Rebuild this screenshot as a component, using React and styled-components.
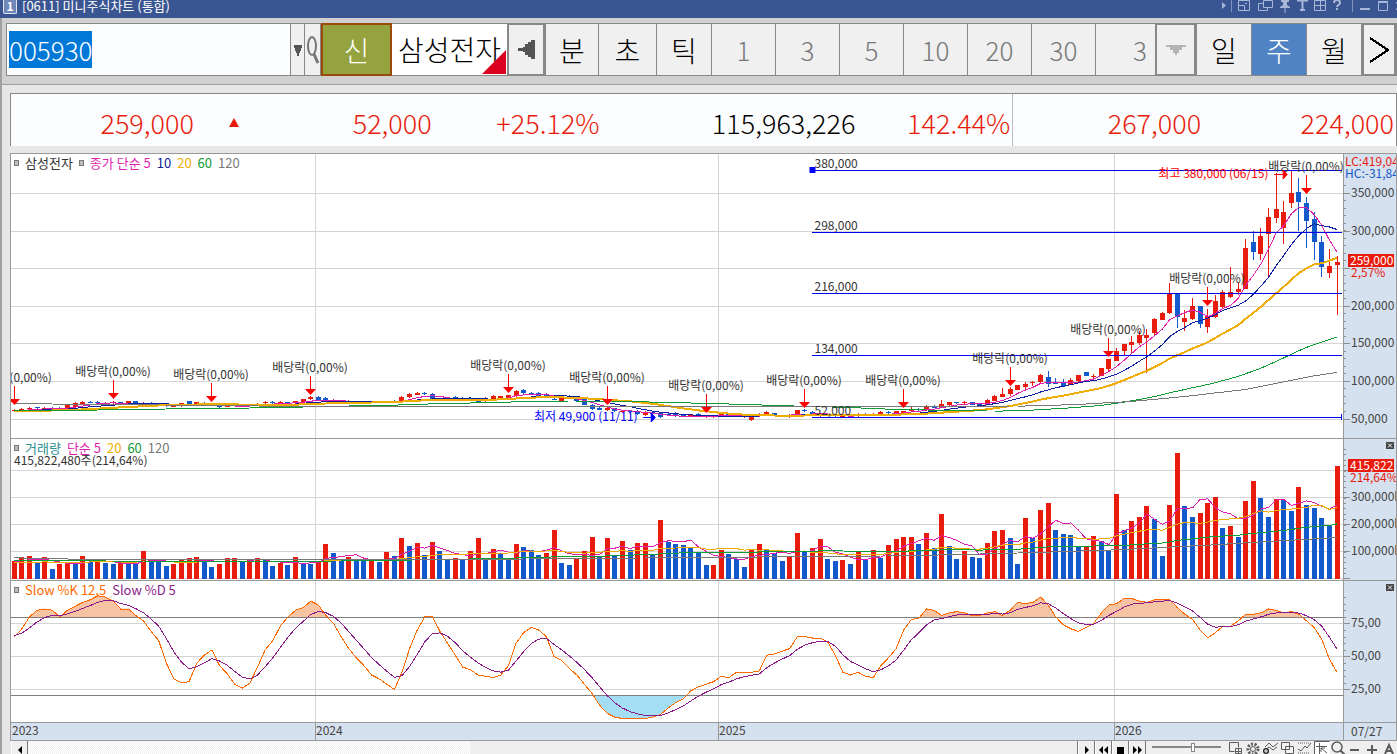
import React, { useEffect, useLayoutEffect, useRef, useState } from 'react';
import { createGlobalStyle, styled } from 'styled-components';

const UP = '#e81b0c';
const DOWN = '#1259cb';
const MA = { 5: '#e01fb0', 10: '#0b1fa0', 20: '#f0ac00', 60: '#0f9b35', 120: '#777777' };

// weekly closes in thousand won, quiet stretch (open is taken from the list below)
const quietClose = [
  62, 63.5, 65, 64.5, 65, 64, 63.5, 68, 71, 72.5, 72, 71.5, 71.5, 72.5, 70, 73.5, 70.5, 71.5, 69.5, 69,
  67.5, 67.5, 70.8, 70.5, 72, 68.5, 69, 65.5, 67.3, 69.5, 68, 69.5, 70.5, 72.5, 71.5, 72.5, 71, 73.5, 76, 79,
  75.5, 73, 75, 73.5, 74, 72.5, 72.5, 73.5, 72.5, 73.5, 73, 79.5, 83.5, 84.5, 83, 76.5, 75, 76.5, 76.5, 76,
  75, 72.5, 78, 80.5, 80, 81.5, 87, 84, 84, 81, 80, 76, 80, 77, 74, 69, 63.5, 62.5, 64.5, 60,
  61, 60, 56.5, 59, 56, 52.5, 55, 53.5, 53, 56, 53.5, 54.5, 54.5, 56, 55, 54.5, 53.5, 53, 56.5, 59.2,
  54.5, 53.5, 55.5, 61.5, 60, 56, 55.5, 54.5, 54, 54.5, 54, 57, 55, 56.5, 59, 57.5, 60,
];
const quietBody = [
  1, 1, 1, -1, 1, -1, -1, 5, 5, 2, -1, -1, 1, 1, -2, 4, -3, 2, -2, -1,
  -2, 1, 4, -3, 2, -3, -1, -2, 1, 1, -1, 2, 1, 1, -1, 1, -1, 2, 3, 3,
  -4, -5, 2, -1, 1, -1, -1, 1, -1, 1, -1, 7, 4, 2, -2, -7, -2, 1, -3, -2,
  -3, -3, 4, 5, 3, 3, 7, -5, -1, -4, -3, -1, 6, -4, -4, -7, -5, -2, 3, -4,
  1, -1, -4, 4, -3, -5, -2, -5, -2, 3, -3, 2, 2, 1, -1, 1, 1, 4, 3, 3,
  -3, -1, 3, 6, -2, -3, 2, -1, -1, 1, -1, 3, -2, 2, 3, -2, 3,
];
// open, close, high, low
const recent = [
  [58.5, 60.5, 61, 58], [60.5, 63, 66, 60], [63, 62.5, 64, 61], [62, 67.5, 68, 61],
  [67.5, 65, 68, 65], [65, 70, 75, 65], [68.5, 72.5, 73, 67], [72, 71.5, 73, 70],
  [71, 72, 74, 69], [72.5, 69, 73, 68], [70, 68.5, 70, 68], [68.5, 75, 76.5, 68],
  [74, 80.5, 82, 74], [79.5, 83, 91, 79], [83, 90, 92, 81], [88.5, 95, 95, 88],
  [92.5, 96.5, 99, 90], [98, 99, 100, 94], [99, 108.5, 110, 97], [106, 96.5, 114, 92],
  [98, 97.5, 105, 96], [99, 94, 103, 93], [95, 102, 105, 95], [100, 108.5, 109, 98],
  [112.5, 107, 113, 107], [106, 107, 110, 102], [107, 117.5, 118, 107], [116.5, 129.5, 130, 114],
  [127, 140, 144, 127], [140, 149.5, 150, 135], [148, 152, 160, 137], [151, 161.5, 167, 148],
  [157.5, 161.5, 169, 111], [164, 183, 184, 161], [181.5, 190.5, 192, 181], [190.5, 217, 230, 189],
  [215.5, 185.5, 216, 171], [179, 184, 195, 167], [183, 200, 211, 182], [200, 176, 200, 171],
  [172, 187, 196, 164.5], [185.5, 206.5, 215, 184], [199, 218.5, 221, 197], [212, 218.5, 252, 211],
  [218.5, 222.5, 231, 215], [222.5, 277, 289, 222], [285, 271.5, 300, 261], [269, 293, 303, 261],
  [295.5, 318, 330, 239], [317, 329, 376, 310], [303.5, 325, 339, 282], [337, 350, 380, 330],
  [351, 338, 370, 300], [337, 313, 345, 277], [315.5, 285, 325, 261], [285, 252, 293, 239],
  [244, 253, 276, 237], [254.5, 259, 267, 188],
];
const candles = quietClose
  .map((c, i) => {
    const o = c - quietBody[i];
    return [o, c, Math.max(o, c) + 1, Math.min(o, c) - 1];
  })
  .concat(recent);

// weekly volume, 81 = 100,000k
const volumes = [
  54, 65, 69, 52, 66, 30, 45, 52, 49, 69, 52, 54, 48, 45, 49, 47, 46, 84, 55, 54,
  39, 45, 60, 63, 66, 56, 36, 45, 63, 64, 55, 56, 63, 56, 39, 48, 42, 66, 48, 45,
  54, 105, 78, 60, 66, 60, 56, 57, 51, 81, 69, 123, 99, 108, 72, 111, 84, 58, 63, 60,
  84, 123, 60, 90, 79, 60, 105, 96, 86, 72, 78, 147, 48, 42, 60, 84, 126, 66, 123, 70,
  114, 87, 108, 109, 74, 177, 111, 105, 102, 95, 79, 42, 43, 87, 75, 60, 36, 87, 105, 88,
  77, 54, 66, 138, 82, 93, 120, 60, 54, 57, 45, 82, 57, 87, 63, 102, 120, 126, 127, 105,
  138, 93, 195, 99, 60, 84, 66, 63, 108, 144, 147, 123, 45, 183, 123, 207, 228, 147, 135, 132,
  97, 98, 129, 114, 85, 255, 146, 174, 186, 219, 180, 69, 222, 378, 219, 186, 198, 228, 246, 153,
  159, 126, 234, 294, 243, 186, 240, 238, 204, 276, 222, 213, 183, 160, 339,
];

const slowK = [
  65, 71, 80, 85, 86, 85, 80, 85, 88, 91, 93, 96, 95, 92, 86, 86, 81, 77, 69, 62,
  45, 33, 30, 31, 45, 51, 55, 43, 37, 29, 26, 30, 42, 55, 62, 73, 80, 85, 87, 92,
  89, 81, 75, 65, 56, 49, 43, 36, 33, 29, 25, 38, 56, 70, 80, 80, 69, 60, 51, 42,
  40, 36, 35, 34, 36, 43, 60, 68, 72, 70, 65, 50, 47, 41, 36, 29, 22, 13, 7, 4,
  3, 3, 3, 3, 4, 6, 11, 15, 18, 24, 27, 29, 31, 35, 34, 38, 38, 38, 39, 51,
  52, 54, 56, 65, 65, 64, 64, 61, 51, 38, 36, 38, 35, 34, 43, 49, 56, 70, 78, 79,
  86, 85, 81, 83, 84, 83, 81, 81, 83, 84, 81, 85, 91, 90, 91, 95, 89, 80, 74, 71,
  69, 72, 75, 83, 89, 90, 94, 94, 92, 91, 93, 93, 93, 87, 82, 78, 70, 64, 68, 73,
  73, 77, 82, 82, 83, 86, 85, 83, 84, 82, 77, 72, 63, 48, 38,
];

const COUNT = candles.length;
const years = [[0, '2023'], [39.6, '2024'], [92.6, '2025'], [144.6, '2026']];
const retracement = [380, 298, 216, 134, 52];
const dividends = [
  [0, 251], [13, 245], [26, 248], [39, 241], [65, 239], [78, 251], [91, 259],
  [104, 254], [117, 254], [131, 232], [144, 203], [157, 152], [170, 40],
];

function average(list, size, seed) {
  return list.map((_, i) => {
    let sum = 0;
    for (let k = i - size + 1; k <= i; k++) sum += k < 0 ? seed : list[k];
    return sum / size;
  });
}

function between(points) {
  return Array.from({ length: COUNT }, (_, i) => {
    const n = points.findIndex((p) => p[0] >= i);
    if (n <= 0) return points[0][1];
    const [x0, y0] = points[n - 1];
    const [x1, y1] = points[n];
    return y0 + ((y1 - y0) * (i - x0)) / (x1 - x0);
  });
}

const closes = candles.map((c) => c[1]);
const priceMa = {
  120: between([[0, 71], [12, 70], [27, 68.5], [40, 67], [60, 67], [68, 67.7], [100, 67.7], [112, 67], [134, 68], [140, 70], [147, 74], [154, 80.5], [162, 90], [171, 108], [174, 112.5]]),
  60: average(closes, 60, 61.5),
  20: average(closes, 20, 61),
  10: average(closes, 10, 61.5),
  5: average(closes, 5, 61.5),
};
const volumeMa = {
  5: average(volumes, 5, 54),
  20: average(volumes, 20, 50),
  60: average(volumes, 60, 56),
  120: between([[0, 65], [10, 60], [60, 60], [90, 66], [117, 71], [133, 80], [145, 89], [157, 103], [174, 126]]),
};
const slowD = slowK.reduce((out, k, i) => {
  out.push(i === 0 ? 66 : out[i - 1] + (k - out[i - 1]) / 3);
  return out;
}, []);

const priceY = (p) => 265 - (p - 50) * 0.7533;
const volumeY = (v) => 140 - v / 3;
const slowY = (v) => 42 + (75 - v) * 1.32;

function useWidth() {
  const ref = useRef(null);
  const [width, setWidth] = useState(1332);
  useLayoutEffect(() => {
    const measure = () => setWidth(ref.current.clientWidth);
    measure();
    const observer = new ResizeObserver(measure);
    observer.observe(ref.current);
    return () => observer.disconnect();
  }, []);
  return [ref, width];
}

function Curve({ data, x, y, color, width = 1 }) {
  const points = data.map((v, i) => `${x(i)},${(y(v) + 0.5).toFixed(1)}`).join(' ');
  return <polyline points={points} fill="none" stroke={color} strokeWidth={width} shapeRendering="crispEdges" />;
}

function Grid({ x, width, height, levels }) {
  return (
    <g fill="#d4d4d4" shapeRendering="crispEdges">
      {levels.map((y) => <rect key={y} x="0" y={y} width={width} height="1" />)}
      {years.slice(1).map(([i, year]) => <rect key={year} x={Math.round(x(i))} y="0" width="1" height={height} />)}
    </g>
  );
}

function PricePlot({ x, width }) {
  const left = x(105);
  return (
    <Plot $height={284}>
      <Grid x={x} width={width} height={284} levels={[39, 77, 114, 152, 189, 227, 265]} />
      <g shapeRendering="crispEdges">
        {candles.map(([o, c, h, l], i) => {
          const cx = Math.floor(x(i));
          const top = Math.round(priceY(Math.max(o, c)));
          const size = Math.max(1, Math.round(priceY(Math.min(o, c))) - top);
          const high = Math.round(priceY(h));
          return (
            <g key={i} fill={c >= o ? UP : DOWN}>
              <rect x={cx} y={high} width="1" height={Math.round(priceY(l)) - high} />
              <rect x={cx - 2} y={top} width="5" height={size} />
            </g>
          );
        })}
      </g>
      <Curve data={priceMa[5]} x={x} y={priceY} color={MA[5]} />
      <Curve data={priceMa[10]} x={x} y={priceY} color={MA[10]} />
      <Curve data={priceMa[20]} x={x} y={priceY} color={MA[20]} width={2} />
      <Curve data={priceMa[60]} x={x} y={priceY} color={MA[60]} />
      <Curve data={priceMa[120]} x={x} y={priceY} color={MA[120]} />
      {retracement.map((p) => (
        <g key={p}>
          <rect x={left} y={Math.floor(priceY(p))} width={width - left - 1} height="1" fill="#0000f0" shapeRendering="crispEdges" />
          <text x={left + 2} y={Math.floor(priceY(p)) - 2} fill="#333">{p},000</text>
        </g>
      ))}
      <rect x={left - 3} y="13" width="6" height="6" fill="#0000ff" />
      <rect x={width - 2} y="260" width="1" height="6" fill="#0000ff" />
      {dividends.map(([i, tip]) => {
        const cx = Math.floor(x(i));
        return (
          <g key={i}>
            <text x={cx} y={tip - 23} fill="#333" textAnchor="middle">배당락(0,00%)</text>
            <rect x={cx} y={tip - 19} width="1" height="14" fill="#f00" />
            <path d={`M${cx - 5} ${tip - 6}h11l-5.5 6z`} fill="#f00" />
          </g>
        );
      })}
      <text x={x(165)} y="24" fill="#f00" textAnchor="end">최고 380,000 (06/15)</text>
      <path d={`M${x(166) - 2} 20.5h9m0-4.500l4 4.500l-4 4.500z`} fill="#f00" stroke="#f00" />
      <text x={x(82)} y="267" fill="#00f" textAnchor="end">최저 49,900 (11/11)</text>
      <path d={`M${x(83) - 2} 263.500h8m0-4.500l4 4.500l-4 4.500z`} fill="#00f" stroke="#00f" />
    </Plot>
  );
}

function VolumePlot({ x, width }) {
  return (
    <Plot $height={141}>
      <Grid x={x} width={width} height={141} levels={[31, 58, 85, 112, 139]} />
      <g shapeRendering="crispEdges">
        {volumes.map((v, i) => (
          <rect key={i} x={Math.floor(x(i)) - 2} y={Math.round(volumeY(v))} width="5" height={Math.round(v / 3)} fill={i === 0 || v > volumes[i - 1] ? UP : DOWN} />
        ))}
      </g>
      {[5, 20, 60, 120].map((n) => <Curve key={n} data={volumeMa[n]} x={x} y={volumeY} color={MA[n]} />)}
    </Plot>
  );
}

function SlowPlot({ x, width }) {
  const line = slowK.map((v, i) => `${x(i)},${slowY(v)}`).join(' ');
  return (
    <Plot $height={141}>
      <clipPath id="overbought"><rect x="0" y="0" width={width} height="36" /></clipPath>
      <clipPath id="oversold"><rect x="0" y="115" width={width} height="30" /></clipPath>
      <Grid x={x} width={width} height={141} levels={[42, 75, 108]} />
      <polygon points={`${x(0)},141 ${line} ${x(174)},141`} fill="#f6c3a3" clipPath="url(#overbought)" />
      <polygon points={`${x(0)},0 ${line} ${x(174)},0`} fill="#a4def4" clipPath="url(#oversold)" />
      <rect x="0" y="36" width={width} height="1" fill="#808080" />
      <rect x="0" y="114" width={width} height="1" fill="#808080" />
      <Curve data={slowK} x={x} y={slowY} color="#ff6a00" />
      <Curve data={slowD} x={x} y={slowY} color="#8b1a8b" />
    </Plot>
  );
}

function Ticks({ from, to, step, major }) {
  const marks = [];
  for (let y = from; y <= to; y += step) marks.push(Math.round(y));
  return (
    <g fill="#8d8d8d">
      {marks.map((y) => <rect key={y} x="0" y={y} width="2" height="1" />)}
      {major.map((y) => <rect key={`m${y}`} x="0" y={y} width="6" height="1" />)}
    </g>
  );
}

function AxisLabels({ rows }) {
  return rows.map(([y, label]) => <text key={label} x="7" y={y + 5} fill="#444">{label}</text>);
}

function ClosePanel() {
  return (
    <CloseButton aria-label="닫기">
      <svg width="8" height="7" viewBox="0 0 8 7"><path d="M2 1.500l4 4M6 1.500l-4 4" stroke="#fff" /></svg>
    </CloseButton>
  );
}

function Charts() {
  const [ref, width] = useWidth();
  const step = (width - 9.3) / (COUNT - 1);
  const x = (i) => 3.3 + i * step;

  return (
    <ChartGrid>
      <Panel ref={ref}>
        <Legend>
          <Marker /><Key $color="#333">삼성전자</Key>
          <Marker /><Key $color={MA[5]}>종가 단순 5</Key>
          <Key $color={MA[10]}>10</Key><Key $color={MA[20]}>20</Key>
          <Key $color={MA[60]}>60</Key><Key $color={MA[120]}>120</Key>
        </Legend>
        <PricePlot x={x} width={width} />
      </Panel>
      <Axis>
        <Plot $height={284}>
          <Ticks from={31} to={270} step={7.533} major={[39, 77, 114, 152, 189, 227, 265]} />
          <AxisLabels rows={[[38, '350,000'], [76, '300,000'], [151, '200,000'], [188, '150,000'], [226, '100,000'], [264, '50,000']]} />
          <text x="1" y="12" fill={UP}>LC:419,04</text>
          <text x="1" y="24" fill={DOWN}>HC:-31,84</text>
          <rect x="4" y="100" width="46" height="13" fill={UP} />
          <text x="6" y="111" fill="#fff">259,000</text>
          <text x="7" y="123" fill={UP}>2,57%</text>
        </Plot>
      </Axis>

      <Panel>
        <Legend>
          <Marker /><Key $color="#2b8f8f">거래량</Key>
          <Key $color={MA[5]}>단순 5</Key><Key $color={MA[20]}>20</Key>
          <Key $color={MA[60]}>60</Key><Key $color={MA[120]}>120</Key>
          <Total>415,822,480주(214,64%)</Total>
        </Legend>
        <VolumePlot x={x} width={width} />
      </Panel>
      <Axis>
        <ClosePanel />
        <Plot $height={141}>
          <Ticks from={10} to={139} step={5.4} major={[31, 58, 85, 112, 139]} />
          <AxisLabels rows={[[57, '300,000k'], [84, '200,000k'], [111, '100,000k']]} />
          <rect x="4" y="20" width="46" height="13" fill={UP} />
          <text x="6" y="31" fill="#fff">415,822</text>
          <text x="6" y="43" fill={UP}>214,64%</text>
        </Plot>
      </Axis>

      <Panel>
        <Legend>
          <Marker /><Key $color="#ff6a00">Slow %K 12,5</Key><Key $color="#8b1a8b">Slow %D 5</Key>
        </Legend>
        <SlowPlot x={x} width={width} />
      </Panel>
      <Axis>
        <ClosePanel />
        <Plot $height={141}>
          <Ticks from={16} to={110} step={6.6} major={[42, 75, 108]} />
          <AxisLabels rows={[[41, '75,00'], [74, '50,00'], [107, '25,00']]} />
        </Plot>
      </Axis>

      <DateAxis>
        <Plot $height={17}>
          {years.map(([i, year], n) => (
            <g key={year}>
              {n > 0 && <rect x={Math.round(x(i))} y="0" width="1" height="17" fill="#999" />}
              <text x={n ? Math.round(x(i)) + 1 : 1} y="12" fill="#444">{year}</text>
            </g>
          ))}
        </Plot>
      </DateAxis>
      <DateAxis $end>07/27</DateAxis>
    </ChartGrid>
  );
}

function TitleIcons() {
  return (
    <svg width="176" height="13" fill="none" stroke="#a9b7d9" strokeWidth="1">
      <path d="M1 2l4 3.500l-4 3.500z" fill="#a9b7d9" stroke="none" />
      <path d="M10.500 0v12M131.500 0v12" stroke="#8193bd" />
      <path d="M17.500 .5h11v10h-11zM17.500 5.500h6v5" />
      <path d="M24 3.500h2M42.500 .5h9v7h-9zM42 3.500h-4.500v7h9v-3" />
      <path d="M60 0h8v2h-2v3l3 2v1h-10v-1l3-2v-3h-2z" fill="#a9b7d9" stroke="none" />
      <path d="M64 8v5" />
      <path d="M81.500 0v10M76 .5h11M79 10h5" strokeWidth="2" />
      <path d="M93.500 .5h11v10h-11zM99.500 0v10M93 5.500h11" />
      <path d="M113 3c0-4 6-4 6 0c0 2-3 2-3 4M116 8v2" strokeWidth="2" />
      <path d="M139 9h10" strokeWidth="2" />
      <path d="M157.500 2.500h9v8h-9zM157 1.500h10" />
      <path d="M175 2l5 8M175 10l5-8" />
    </svg>
  );
}

export default function App() {
  const codeRef = useRef(null);
  useEffect(() => {
    codeRef.current.focus();
    codeRef.current.select();
  }, []);

  return (
    <Window>
      <GlobalStyle />
      <TitleBar>
        <WindowNumber>1</WindowNumber>
        <WindowTitle>[0611] 미니주식차트 (통합)</WindowTitle>
        <TitleIcons />
      </TitleBar>
      <Body>
        <Toolbar>
          <CodeInput ref={codeRef} aria-label="종목코드" defaultValue="005930" />
          <Tool $width={14} aria-label="종목 목록">
            <svg width="8" height="12"><path d="M0 1h8v3h-1v3h-1v2h-1v3h-2v-3h-1v-2h-1v-3h-1z" fill="#555" /></svg>
          </Tool>
          <Tool $width={16} aria-label="종목 검색">
            <svg width="14" height="34" fill="none" stroke="#777" strokeWidth="2"><ellipse cx="6" cy="13" rx="4" ry="9" /><path d="M8 21q2 5 4 9" strokeWidth="3" /></svg>
          </Tool>
          <CreditButton>신</CreditButton>
          <StockName>삼성전자</StockName>
          <Tool $width={39} $framed aria-label="이전">
            <svg width="17" height="19"><path d="M17 0h-4v2h-3v2h-3v3h-2v1h-5v3h5v1h2v3h3v2h3v2h4z" fill="#555" /></svg>
          </Tool>
          <Tool $width={53}>분</Tool>
          <Tool $width={58}>초</Tool>
          <Tool $width={55}>틱</Tool>
          {['1', '3', '5', '10', '20', '30'].map((n) => <Tool key={n} $width={64} $muted>{n}</Tool>)}
          <UnitInput aria-label="주기" defaultValue="3" />
          <Tool $width={42} $framed aria-label="주기 선택">
            <svg width="20" height="10"><path d="M0 0h20v2h-4v3h-3v3h-2v2h-2v-2h-2v-3h-3v-3h-4z" fill="#b4b4b4" /></svg>
          </Tool>
          <Tool $width={55}>일</Tool>
          <Tool $width={55} $active>주</Tool>
          <Tool $width={55}>월</Tool>
          <Tool $width={35} $framed aria-label="더보기">
            <svg width="21" height="26" fill="none" stroke="#000" strokeWidth="2" shapeRendering="crispEdges"><path d="M1 1l18 12l-18 12" /></svg>
          </Tool>
        </Toolbar>

        <Quote>
          <Cell>259,000</Cell>
          <Cell $between><svg width="10" height="9"><path d="M0 9h10l-5-9z" fill={UP} /></svg>52,000</Cell>
          <Cell>+25.12%</Cell>
          <Cell $plain>115,963,226</Cell>
          <Cell $divider>142.44%</Cell>
          <Cell>267,000</Cell>
          <Cell>224,000</Cell>
        </Quote>

        <Charts />

        <BottomBar>
          <SmallButton aria-label="왼쪽으로"><svg width="6" height="8"><path d="M5 0v8l-4-4z" /></svg></SmallButton>
          <Track><Thumb /></Track>
          <SmallButton aria-label="재생"><svg width="6" height="8"><path d="M1 0v8l4-4z" /></svg></SmallButton>
          <SmallButton aria-label="뒤로"><svg width="9" height="8"><path d="M4 0v8l-4-4zM9 0v8l-4-4z" /></svg></SmallButton>
          <SmallButton aria-label="정지"><svg width="7" height="7"><path d="M0 0h7v7h-7z" /></svg></SmallButton>
          <SmallButton aria-label="앞으로"><svg width="9" height="8"><path d="M0 0v8l4-4zM5 0v8l4-4z" /></svg></SmallButton>
          <Speed type="range" min="0" max="100" defaultValue="60" aria-label="속도" />
          <svg width="168" height="13" fill="none" stroke="#5b5b5b">
            <path d="M.5 1.500h9v5M.5 1.500v9h5M6.500 7.500h6v5h-6zM9.500 7v6M6 10.500h7" />
            <circle cx="24" cy="8" r="5" strokeWidth="3" strokeDasharray="2 1.500" /><circle cx="24" cy="8" r="2.500" />
            <path d="M36 6l4-4l4 4l5-4M36 9l4-3l4 3l4-3" /><circle cx="37" cy="10" r="3" fill="#222" stroke="none" /><path d="M35 10h4M37 8v4" stroke="#fff" />
            <path d="M52.500 1.500h8v7h-8zM56.500 5.500h8v7h-8z" fill="#f4f4f4" />
            <path d="M69 2h12M69 12h12" strokeDasharray="1 1" /><path d="M69 8l3 2l4-5l2 2l4-5" />
            <path d="M86 0h15v13h-15z" fill="#fff" stroke="none" /><path d="M85.500 13v-12.500h15M90.500 2v11M87 5.500h11M92 7l6 5M92 11v-4h4" />
            <circle cx="108" cy="6" r="5" strokeWidth="1.500" /><path d="M111.500 9.500l4 4" strokeWidth="2" />
            <path d="M121 9h9M138 9h10M143 4v9" strokeWidth="2" />
            <path d="M156 13l4-9l4 9M157 10h6" strokeWidth="2" />
          </svg>
        </BottomBar>
      </Body>
    </Window>
  );
}

const GlobalStyle = createGlobalStyle`
  * {
    box-sizing: border-box;
  }
  body {
    margin: 0;
    overflow: hidden;
    font-family: 'Noto Sans CJK KR', sans-serif;
    font-size: 12px;
    line-height: 1;
  }
  button, input {
    margin: 0;
    padding: 0;
    border: 0;
    border-radius: 0;
    font: inherit;
    outline: none;
  }
`;

const Window = styled.div`
  display: flex;
  flex-direction: column;
  height: 100vh;
  overflow: hidden;
  background: #e7e7e7;
`;

const TitleBar = styled.header`
  display: flex;
  align-items: flex-start;
  gap: 5px;
  flex: none;
  height: 18px;
  padding-left: 3px;
  background: #3a5692;
  color: #fff;
`;

const WindowNumber = styled.span`
  width: 14px;
  height: 14px;
  border: 1px solid #e0e6f2;
  border-top: 0;
  border-radius: 0 0 2px 2px;
  background: #6f87b8;
  font-size: 12px;
  font-weight: 700;
  text-align: center;
`;

const WindowTitle = styled.h1`
  flex: 1;
  margin: 0;
  font-size: 13px;
  font-weight: 400;
  line-height: 12px;
`;

const Body = styled.main`
  flex: 1;
  border-left: 2px solid #a0a0a0;
`;

const Toolbar = styled.div`
  display: flex;
  height: 67px;
  padding: 5px 0 8px 4px;
  border-bottom: 1px solid #a0a0a0;
  background: #d0d0d0;
  font-size: 28px;
  font-weight: 300;
`;

const CodeInput = styled.input`
  flex: 1;
  min-width: 90px;
  padding-left: 2px;
  border: 1px solid #888;
  background: #fcfdfe;
  font-size: 26px;
  line-height: 26px;

  &::selection {
    background: #0078d7;
    color: #fff;
  }
`;

const Tool = styled.button`
  display: flex;
  align-items: center;
  justify-content: center;
  flex: none;
  width: ${({ $width }) => $width}px;
  border: solid #888;
  border-width: ${({ $framed }) => ($framed ? '2px 3px 2px 2px' : '1px 1px 1px 0')};
  background: ${({ $active }) => ($active ? '#4f83c4' : '#f0f0f0')};
  color: ${({ $active, $muted }) => ($active ? '#fff' : $muted ? '#777' : '#000')};
  font-size: ${({ $muted }) => ($muted ? 26 : 28)}px;
`;

const CreditButton = styled.button`
  flex: none;
  width: 71px;
  border: 2px solid #9a4a0a;
  background: #94a33d;
  color: #fff;
`;

const StockName = styled.div`
  position: relative;
  flex: none;
  width: 115px;
  padding-top: 11px;
  border-top: 1px solid #888;
  border-bottom: 1px solid #888;
  background: #fff;
  white-space: nowrap;
  text-align: center;

  &::after {
    content: '';
    position: absolute;
    right: 1px;
    bottom: 1px;
    border: 12px solid transparent;
    border-right-color: #dc0020;
    border-bottom-color: #dc0020;
  }
`;

const UnitInput = styled.input`
  flex: none;
  width: 59px;
  padding-right: 8px;
  border-top: 1px solid #888;
  border-bottom: 1px solid #888;
  background: #f0f0f0;
  color: #777;
  font-size: 26px;
  text-align: right;
`;

const Quote = styled.div`
  display: grid;
  grid-template-columns: 185fr 238fr 168fr 256fr 156fr 190fr 193fr;
  height: 53px;
  margin: 8px 0 7px 8px;
  border: solid #888;
  border-width: 1px 1px 0 1px;
  background: #fcfdfe;
`;

const Cell = styled.div`
  display: flex;
  align-items: center;
  justify-content: ${({ $between }) => ($between ? 'space-between' : 'flex-end')};
  padding: 4px 2px 0 ${({ $between }) => ($between ? 33 : 0)}px;
  border-right: ${({ $divider }) => ($divider ? '1px solid #bbb' : 0)};
  color: ${({ $plain }) => ($plain ? '#000' : UP)};
  font-size: 27px;
  font-weight: 300;
`;

const ChartGrid = styled.section`
  display: grid;
  grid-template-columns: 1fr 53px;
  margin-left: 8px;
  border: 1px solid #999;
  border-top: 0;
`;

const Panel = styled.div`
  position: relative;
  min-width: 0;
  border-top: 1px solid #999;
  background: #fff;
`;

const Axis = styled.div`
  position: relative;
  border-top: 1px solid #999;
  border-left: 1px solid #999;
  background: #d6e1ef;
`;

const DateAxis = styled.div`
  height: 18px;
  padding: ${({ $end }) => ($end ? '2px 0 0 7px' : 0)};
  border-top: 1px solid #999;
  border-left: ${({ $end }) => ($end ? '1px solid #999' : 0)};
  background: #d6e1ef;
  color: #444;
`;

const Plot = styled.svg`
  display: block;
  width: 100%;
  height: ${({ $height }) => $height}px;
  overflow: hidden;
`;

const Legend = styled.div`
  position: absolute;
  top: 2px;
  left: 3px;
  display: flex;
  flex-wrap: wrap;
  align-items: center;
  column-gap: 6px;
  width: 260px;
  font-size: 13px;
`;

const Marker = styled.i`
  width: 5px;
  height: 6px;
  border: 1px solid #777;
  background: #bbb;
`;

const Key = styled.span`
  color: ${({ $color }) => $color};
`;

const Total = styled.span`
  width: 100%;
  color: #333;
  font-size: 12px;
`;

const CloseButton = styled.button`
  position: absolute;
  top: 3px;
  right: 2px;
  width: 8px;
  height: 7px;
  background: #444;
  line-height: 0;
`;

const BottomBar = styled.footer`
  display: flex;
  height: 18px;
  margin-left: 9px;
  background: #efefef;
`;

const SmallButton = styled.button`
  display: flex;
  align-items: center;
  justify-content: center;
  flex: none;
  width: 17px;
  border-right: 1px solid #777;
  border-left: 1px solid #fff;
  background: #efefef;
`;

const Track = styled.div`
  flex: 1;
  border-right: 1px solid #777;
  background: repeating-conic-gradient(#fff 0 25%, #f0f0f0 0 50%) 0 0 / 2px 2px;
`;

const Thumb = styled.div`
  width: 58%;
  height: 100%;
  margin-left: auto;
  border-left: 1px solid #fff;
  background: #efefef;
`;

const Speed = styled.input`
  flex: none;
  width: 69px;
  height: 13px;
  margin: 0 8px 0 6px;
  appearance: none;
  background: linear-gradient(#888, #888) 0 5px / 100% 2px no-repeat;

  &::-webkit-slider-thumb {
    appearance: none;
    width: 4px;
    height: 9px;
    border: 1px solid #888;
    background: #fff;
  }
`;
